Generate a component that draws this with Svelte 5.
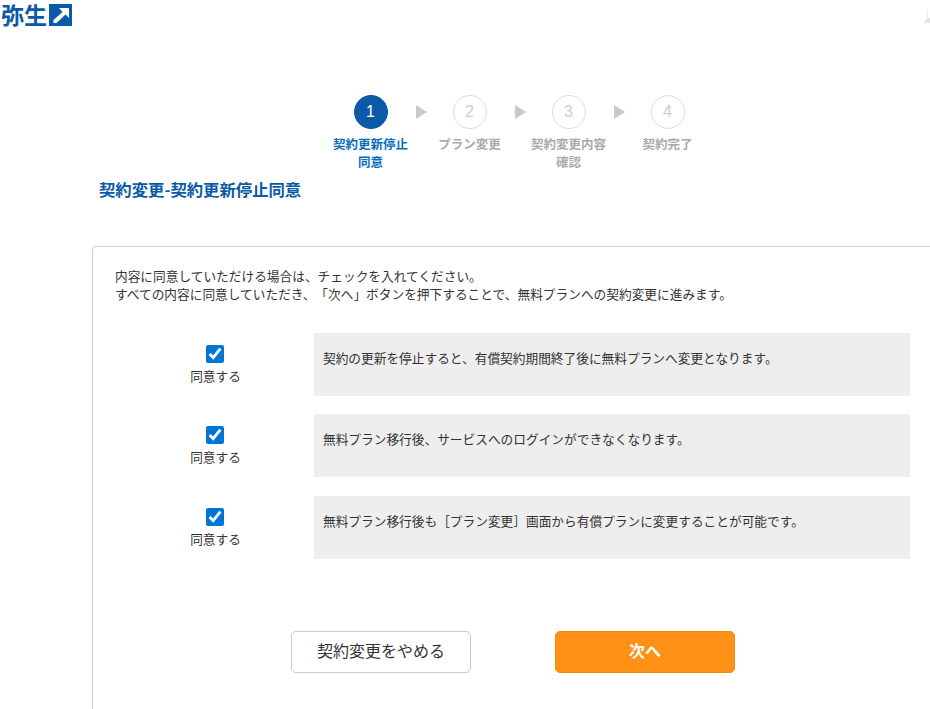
<script lang="ts">
  const steps = [
    { no: 1, label: ['契約更新停止', '同意'], active: true },
    { no: 2, label: ['プラン変更'], active: false },
    { no: 3, label: ['契約変更内容', '確認'], active: false },
    { no: 4, label: ['契約完了'], active: false }
  ];
  const terms = [
    '契約の更新を停止すると、有償契約期間終了後に無料プランへ変更となります。',
    '無料プラン移行後、サービスへのログインができなくなります。',
    '無料プラン移行後も［プラン変更］画面から有償プランに変更することが可能です。'
  ];
</script>

<div class="page">
  <header class="header">
    <span class="logo-text">弥生</span>
    <svg class="logo-mark" width="23" height="22" viewBox="0 0 23 22">
      <rect width="23" height="22" fill="#0a5aa8" />
      <path d="M4.5 16 L13.5 8 L10 4 H20 V14 L16.5 10.5 L7.5 19 H4.5 Z" fill="#fff" />
    </svg>
    <!-- menu icon, cut off by the window edge -->
    <svg class="corner" width="6" height="14" viewBox="0 0 6 14">
      <rect x="3" y="0" width="1" height="8" fill="#f1e9e2" />
      <path d="M0 13 Q1 9 4 8 H6 V13 Z" fill="#e4e4e4" />
    </svg>
  </header>

  <div class="steps">
    {#each steps as step, i}
      <div class="step" class:active={step.active}>
        <div class="circle">{step.no}</div>
        <div class="label">
          {#each step.label as line}
            <div>{line}</div>
          {/each}
        </div>
        {#if i < steps.length - 1}
          <span class="arrow"></span>
        {/if}
      </div>
    {/each}
  </div>

  <h1 class="title">契約変更-契約更新停止同意</h1>

  <section class="box">
    <p class="intro">
      内容に同意していただける場合は、チェックを入れてください。<br />
      すべての内容に同意していただき、「次へ」ボタンを押下することで、無料プランへの契約変更に進みます。
    </p>

    <div class="terms">
      {#each terms as term}
        <div class="term">
          <label class="agree">
            <input type="checkbox" checked />
            <span>同意する</span>
          </label>
          <div class="term-text">{term}</div>
        </div>
      {/each}
    </div>

    <div class="actions">
      <button class="btn cancel">契約変更をやめる</button>
      <button class="btn next">次へ</button>
    </div>
  </section>
</div>

<style>
  :global(body) {
    margin: 0;
    background: #fff;
  }
  .page {
    width: 930px;
    height: 709px;
    overflow: hidden;
    font-family: "Noto Sans CJK JP", "Liberation Sans", sans-serif;
    color: #333;
    font-size: 12.7px;
    text-spacing-trim: space-all;
  }
  .header {
    display: flex;
    align-items: center;
    gap: 2px;
    height: 28px;
    padding-left: 1px;
  }
  .logo-text {
    font-size: 23px;
    line-height: 28px;
    font-weight: 700;
    color: #0a5aa8;
  }
  .logo-mark {
    margin-top: 1px;
  }
  .corner {
    margin-left: auto;
    margin-top: 6px;
  }
  .steps {
    display: flex;
    justify-content: center;
    margin: 67px 0 0 0;
    padding-left: 108px;
  }
  .step {
    position: relative;
    width: 99px;
    display: flex;
    flex-direction: column;
    align-items: center;
  }
  .circle {
    width: 32px;
    height: 32px;
    border: 1.5px solid #ddd;
    border-radius: 50%;
    display: flex;
    align-items: center;
    justify-content: center;
    color: #ccc;
    font-family: "Liberation Sans", sans-serif;
    font-size: 16px;
    background: #fff;
  }
  .active .circle {
    background: #0a5aa8;
    border-color: #0a5aa8;
    color: #fff;
  }
  .label {
    margin-top: 6px;
    font-size: 12.5px;
    line-height: 18px;
    font-weight: 700;
    text-align: center;
    color: #aaa;
  }
  .active .label {
    color: #0a6ebd;
  }
  .arrow {
    position: absolute;
    left: 95px;
    top: 10px;
    border-left: 11px solid #c3cad5;
    border-top: 7px solid transparent;
    border-bottom: 7px solid transparent;
  }
  .title {
    margin: 6px 0 0 99px;
    font-size: 16.35px;
    line-height: 24px;
    font-weight: 700;
    color: #0a5aa8;
  }
  .box {
    margin: 45px 0 0 92px;
    width: 900px;
    height: 500px;
    box-sizing: border-box;
    border: 1px solid #ccc;
    border-radius: 4px;
    padding: 20px 0 0 22px;
  }
  .intro {
    margin: 0;
    line-height: 18px;
  }
  .terms {
    display: flex;
    flex-direction: column;
    gap: 18.4px;
    margin-top: 30px;
  }
  .term {
    display: flex;
    height: 63px;
  }
  .agree {
    width: 199px;
    display: flex;
    flex-direction: column;
    align-items: center;
    padding-top: 12px;
  }
  .agree input {
    width: 18px;
    height: 18px;
    margin: 0 0 3px;
    accent-color: #0075d8;
  }
  .agree span {
    margin-left: 2px;
  }
  .term-text {
    width: 596px;
    box-sizing: border-box;
    padding: 15px 9px;
    background: #eee;
    line-height: 20px;
  }
  .actions {
    display: flex;
    gap: 84px;
    margin: 72px 0 0 176px;
  }
  .btn {
    width: 180px;
    height: 42px;
    border-radius: 5px;
    font-family: inherit;
    font-size: 16px;
    padding: 0 0 4px;
  }
  .cancel {
    background: #fff;
    border: 1px solid #ccc;
    color: #333;
  }
  .next {
    background: #ff9216;
    border: 1px solid #ee8a10;
    color: #fff;
    font-weight: 700;
  }
</style>
